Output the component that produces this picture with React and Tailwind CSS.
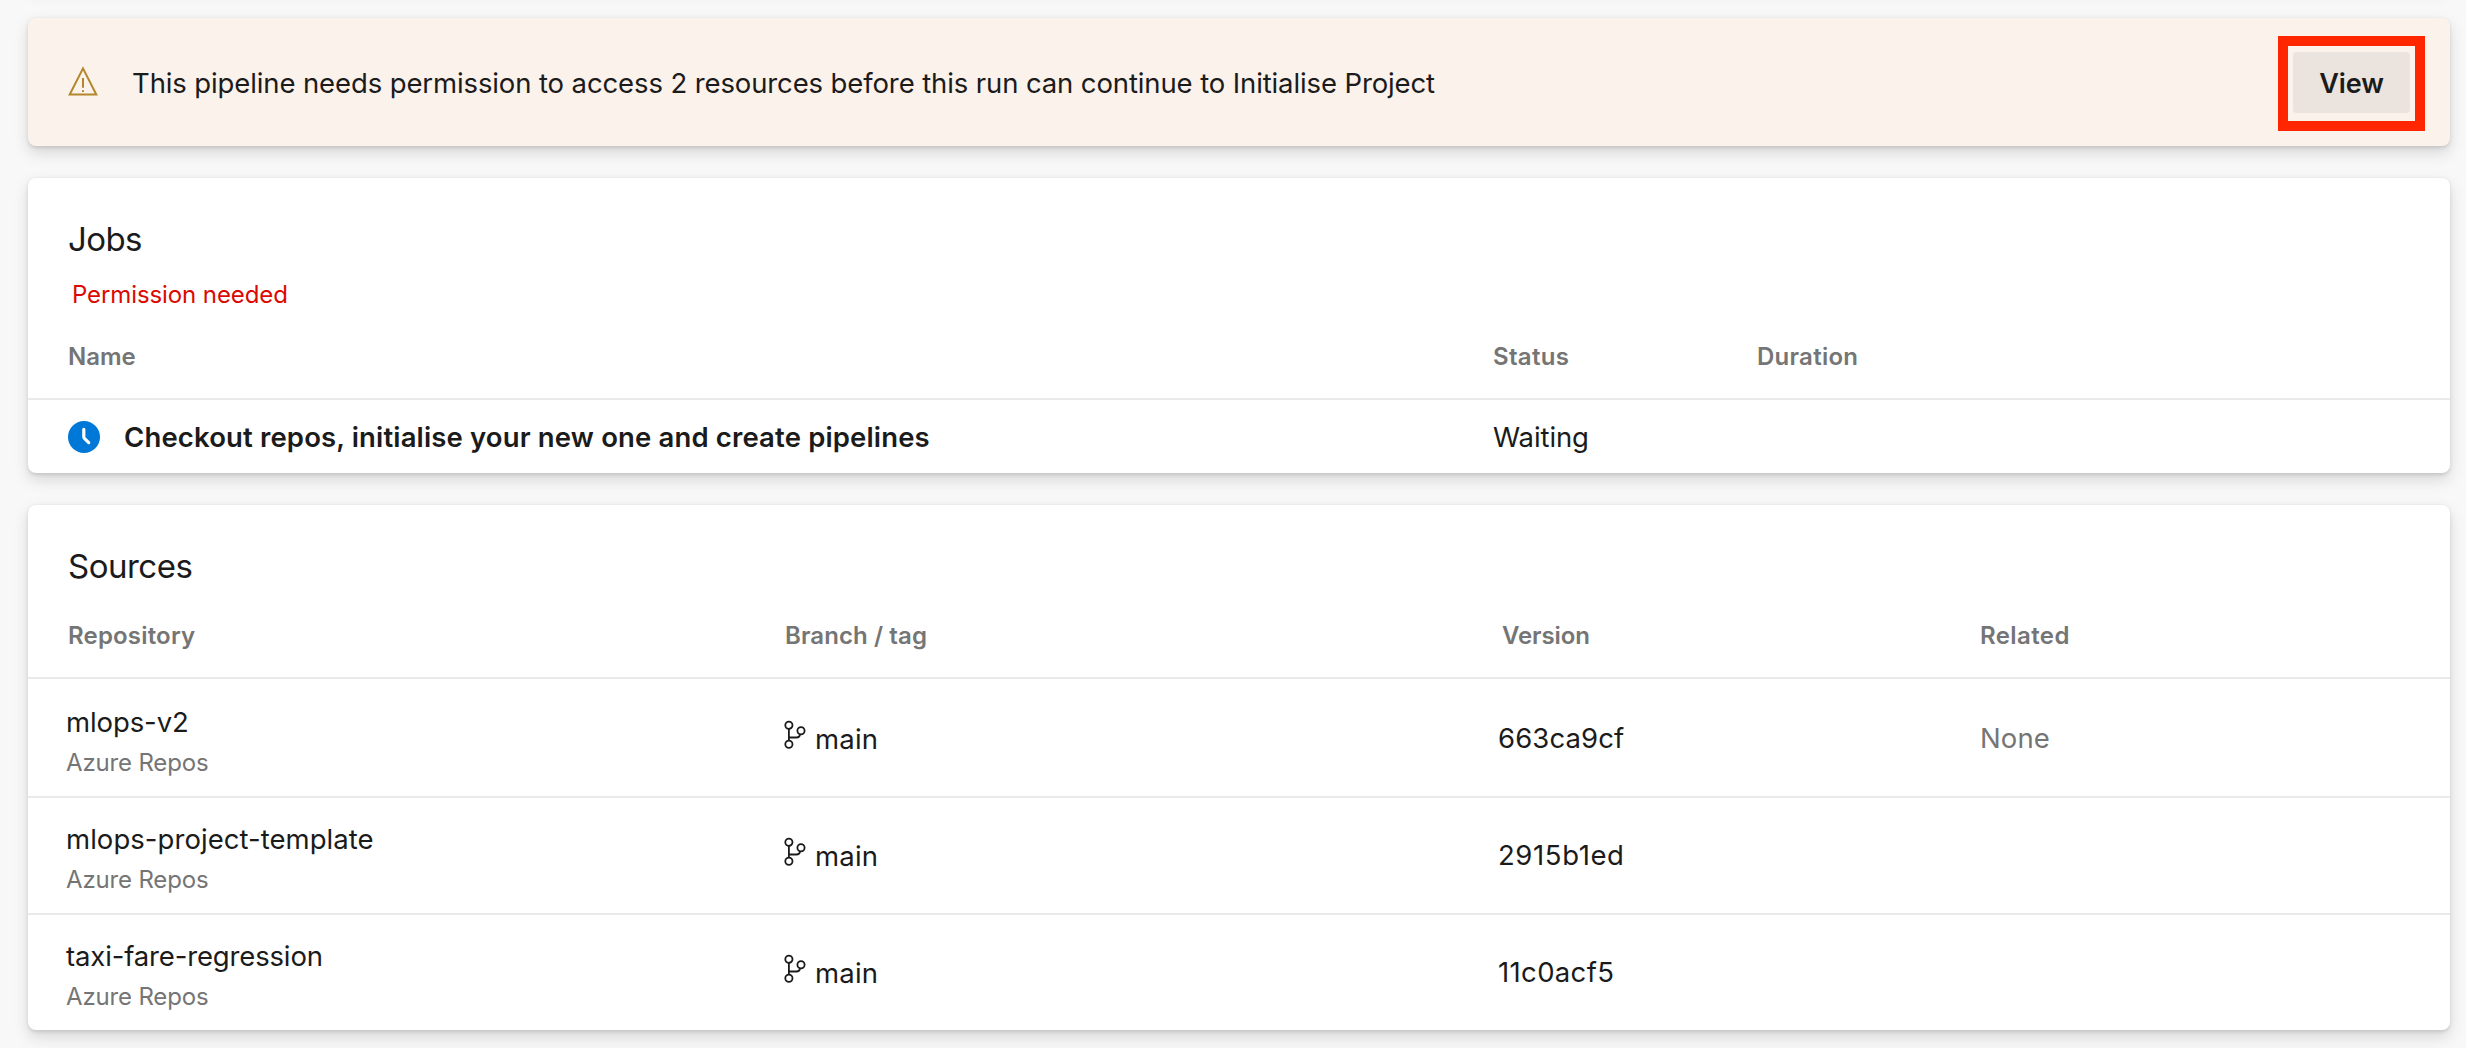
import React from "react";

const cardShadow =
  "rounded-lg shadow-[0_6.4px_14.4px_rgba(0,0,0,0.132),0_1.2px_3.6px_rgba(0,0,0,0.108)]";

const repositories = [
  {
    name: "mlops-v2",
    nameClass: "tracking-[-0.1px]",
    version: "663ca9cf",
    versionClass: "tracking-[0.1px]",
    related: "None",
  },
  {
    name: "mlops-project-template",
    nameClass: "tracking-[0.05px]",
    version: "2915b1ed",
    versionClass: "tracking-[0.6px]",
  },
  {
    name: "taxi-fare-regression",
    nameClass: "tracking-[-0.15px]",
    version: "11c0acf5",
    versionClass: "tracking-[0.35px]",
  },
];

function WarningIcon() {
  return (
    <svg className="mt-[3px] h-[30px] w-[30px] shrink-0" viewBox="0 0 30 30" fill="none">
      <path d="M15 2.4 28.3 28.6H1.7Z" stroke="#b3862a" strokeWidth="2" />
      <path d="M15 12v9.8M15 24.2v1.9" stroke="#b3862a" strokeWidth="2" />
    </svg>
  );
}

function WaitingIcon() {
  return (
    <svg className="mt-1 h-8 w-8 shrink-0" viewBox="0 0 32 32" fill="none">
      <circle cx="16" cy="16" r="16" fill="#0078d7" />
      <path
        d="M15.8 8.4v7.4q0 .9.6 1.5l4.3 4.3"
        stroke="#fff"
        strokeWidth="3.2"
        strokeLinecap="round"
        strokeLinejoin="round"
      />
    </svg>
  );
}

function BranchIcon() {
  return (
    <svg className="h-[30px] w-6 shrink-0" viewBox="0 0 24 30" fill="none" stroke="#1b1b1b" strokeWidth="1.8">
      <circle cx="5.9" cy="5.2" r="3.6" />
      <circle cx="18" cy="10.7" r="3.6" />
      <circle cx="5.9" cy="24.3" r="3.6" />
      <path d="M5.9 8.8v11.9M5.9 17.5H13.6c2 0 3.1-.9 3.5-3.2" />
    </svg>
  );
}

function ColumnTitle({ className = "", children }) {
  return (
    <div className={`text-2xl leading-[31px] font-semibold text-[#757575] ${className}`}>
      {children}
    </div>
  );
}

function Banner() {
  return (
    <section className={`flex h-32 items-start bg-[#fbf2ec] pr-10 pl-10 ${cardShadow}`}>
      <div className="flex grow pt-[45px]">
        <WarningIcon />
        <p className="ml-[34px] text-[27.5px] leading-10 tracking-[-0.117px]">
          This pipeline needs permission to access 2 resources before this run can continue to
          Initialise Project
        </p>
      </div>
      <button className="relative mt-[34px] h-[61px] w-[117px] shrink-0 rounded bg-[#ebe3de] pt-3 pb-[9px] text-[27px] leading-10 font-semibold tracking-[-0.1px]">
        View
        <span className="pointer-events-none absolute -top-4 -right-[15px] -bottom-[18px] -left-[15px] border-10 border-[#ff2600]" />
      </button>
    </section>
  );
}

function Jobs() {
  return (
    <section className={`h-[295px] bg-white pt-[41px] ${cardShadow}`}>
      <h2 className="pl-10 text-[33px] leading-10 tracking-[-0.6px]">Jobs</h2>
      <p className="mt-5 pl-11 text-2xl leading-[31px] tracking-[-0.1px] text-[#da0a00]">
        Permission needed
      </p>
      <div className="mt-[31px] grid grid-cols-[1425px_264px_1fr] border-b-2 border-[#eaeaea] pb-[26px] pl-10">
        <ColumnTitle>Name</ColumnTitle>
        <ColumnTitle className="tracking-[0.3px]">Status</ColumnTitle>
        <ColumnTitle className="tracking-[0.26px]">Duration</ColumnTitle>
      </div>
      <div className="grid grid-cols-[1425px_264px_1fr] pt-[17px] pl-10 text-[27.5px] leading-10">
        <div className="flex">
          <WaitingIcon />
          <span className="ml-6 font-semibold tracking-[0.15px]">
            Checkout repos, initialise your new one and create pipelines
          </span>
        </div>
        <div className="tracking-[-0.1px]">Waiting</div>
      </div>
    </section>
  );
}

function Sources() {
  return (
    <section className={`h-[525px] bg-white pt-[41px] ${cardShadow}`}>
      <h2 className="pl-10 text-[33px] leading-10 tracking-[-0.5px]">Sources</h2>
      <div className="mt-[34px] grid grid-cols-[717px_717px_478px_1fr] border-b-2 border-[#eaeaea] pb-[26px] pl-10">
        <ColumnTitle className="tracking-[0.18px]">Repository</ColumnTitle>
        <ColumnTitle className="tracking-[0.1px]">Branch / tag</ColumnTitle>
        <ColumnTitle className="tracking-[-0.1px]">Version</ColumnTitle>
        <ColumnTitle className="tracking-[0.4px]">Related</ColumnTitle>
      </div>
      {repositories.map((repo) => (
        <div
          key={repo.name}
          className="grid h-[117px] grid-cols-[717px_715px_481px_1fr] border-t-2 border-[#eaeaea] pl-[38px] text-[27.5px] leading-10 [&:nth-child(3)]:border-transparent"
        >
          <div className="pt-[21px]">
            <div className={repo.nameClass}>{repo.name}</div>
            <div className="mt-[5px] text-2xl leading-[31px] tracking-[-0.16px] text-[#757575]">
              Azure Repos
            </div>
          </div>
          <div className="flex pt-[38px]">
            <div className="mt-px">
              <BranchIcon />
            </div>
            <span className="ml-2 tracking-[0.2px]">main</span>
          </div>
          <div className={`pt-[37px] ${repo.versionClass}`}>{repo.version}</div>
          <div className="pt-[37px] pl-px tracking-[0.1px] text-[#757575]">{repo.related}</div>
        </div>
      ))}
    </section>
  );
}

export default function App() {
  return (
    <main className="flex h-[1048px] w-[2466px] flex-col gap-8 overflow-hidden bg-[#f8f8f8] pr-4 pl-7 font-['Inter',sans-serif] text-[#1b1b1b]">
      <div className={`-mt-[34px] h-5 shrink-0 bg-white ${cardShadow}`} />
      <div className="flex shrink-0 flex-col gap-8">
        <Banner />
        <Jobs />
        <Sources />
      </div>
    </main>
  );
}
